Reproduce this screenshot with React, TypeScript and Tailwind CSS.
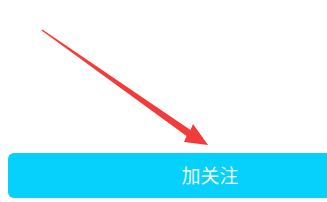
import React from "react";

export default function App() {
  return (
    <div className="relative w-[327px] h-[202px] bg-white overflow-hidden flex flex-col justify-end pb-[4px] pl-[8px]">
      <svg
        className="absolute left-0 top-0"
        width="327"
        height="202"
        viewBox="0 0 327 202"
      >
        <path
          d="M42.4,29.4 L190.5,130.1 L193,124 L208,145 L184,142 L186.5,135.9 L41.6,30.6 Z"
          fill="#f23b3b"
        />
      </svg>
      <div
        className="w-[404px] h-[45px] shrink-0 rounded-[6px] bg-[#06d0fc] flex items-center justify-center text-white/95 text-[19px]"
        style={{ fontFamily: '"Noto Sans CJK SC", sans-serif' }}
      >
        加关注
      </div>
    </div>
  );
}
